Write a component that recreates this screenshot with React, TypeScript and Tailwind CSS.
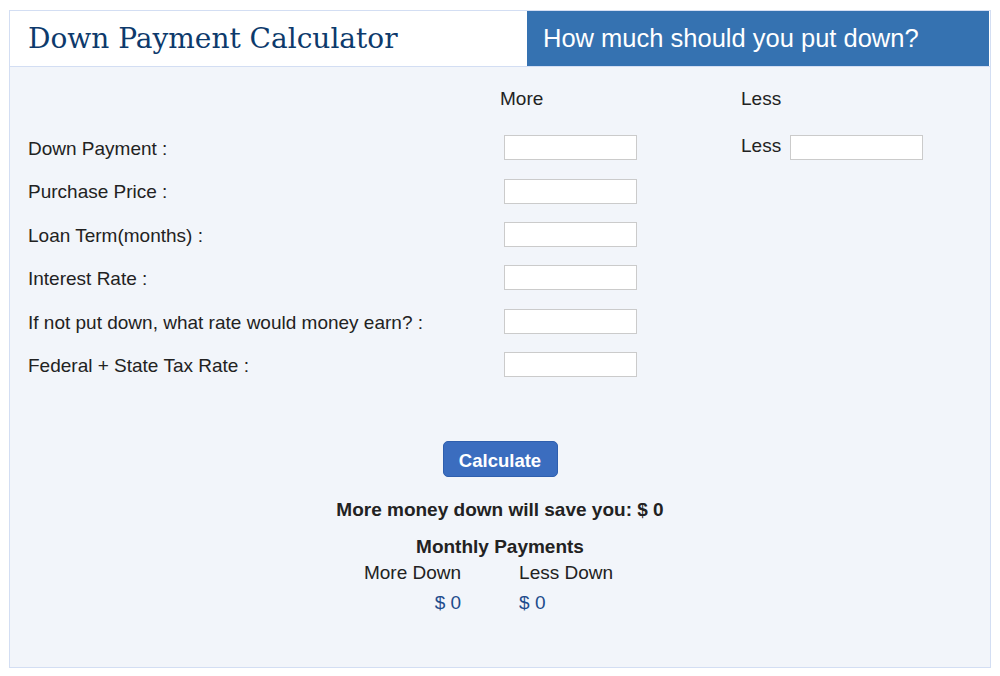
import React from "react";

const rows = [
  "Down Payment :",
  "Purchase Price :",
  "Loan Term(months) :",
  "Interest Rate :",
  "If not put down, what rate would money earn? :",
  "Federal + State Tax Rate :",
];

export default function App() {
  return (
    <div className="w-[1000px] h-[676px] bg-white pt-[10px] pl-[9px]" style={{ fontFamily: '"Liberation Sans", Arial, sans-serif' }}>
      <div className="w-[982px] h-[658px] border border-[#d3def3] flex flex-col">
        <div className="flex h-[56px] border-b border-[#d3def3] bg-white">
          <div className="flex-1 flex items-center pl-[18px]">
            <h1 className="text-[28px] text-[#0d3a6c] leading-none" style={{ fontFamily: '"DejaVu Serif", Georgia, serif' }}>
              Down Payment Calculator
            </h1>
          </div>
          <div className="w-[462px] h-[55px] bg-[#3572b1] flex items-center pl-[16px] mr-px">
            <span className="text-white text-[25.5px] leading-none">How much should you put down?</span>
          </div>
        </div>
        <div className="flex-1 bg-[#f2f5fa] text-[#222] text-[19px]">
          <div className="flex h-[24px] mt-[20px] items-center">
            <div className="w-[490px]" />
            <div className="w-[241px]">More</div>
            <div>Less</div>
          </div>
          <div className="mt-[15px]">
            {rows.map((r, i) => (
              <div key={r} className="flex h-[43.4px] items-center">
                <div className="w-[494px] pl-[18px] pt-[3px]">{r}</div>
                <input className="w-[133px] h-[25px] bg-white border border-[#cbcbcb] outline-none" />
                {i === 0 && (
                  <div className="flex items-center ml-[104px]">
                    <span className="mr-[9px] -mt-[2px]">Less</span>
                    <input className="w-[133px] h-[25px] bg-white border border-[#cbcbcb] outline-none" />
                  </div>
                )}
              </div>
            ))}
          </div>
          <div className="flex flex-col items-center mt-[55px]">
            <button className="w-[115px] h-[36px] pt-[3px] rounded-[5px] bg-[#3b6dbf] border border-[#2f5fae] text-white font-bold text-[18.5px]">
              Calculate
            </button>
            <div className="mt-[23px] font-bold leading-[20px]">More money down will save you: $ 0</div>
            <div className="mt-[17px] font-bold leading-[20px]">Monthly Payments</div>
            <div className="flex gap-[58px] pr-[23px] mt-[6px] leading-[20px]">
              <div className="flex flex-col items-end">
                <span>More Down</span>
                <span className="mt-[10px] text-[#1d4c8c]">$ 0</span>
              </div>
              <div className="flex flex-col items-start">
                <span>Less Down</span>
                <span className="mt-[10px] text-[#1d4c8c]">$ 0</span>
              </div>
            </div>
          </div>
        </div>
      </div>
    </div>
  );
}
